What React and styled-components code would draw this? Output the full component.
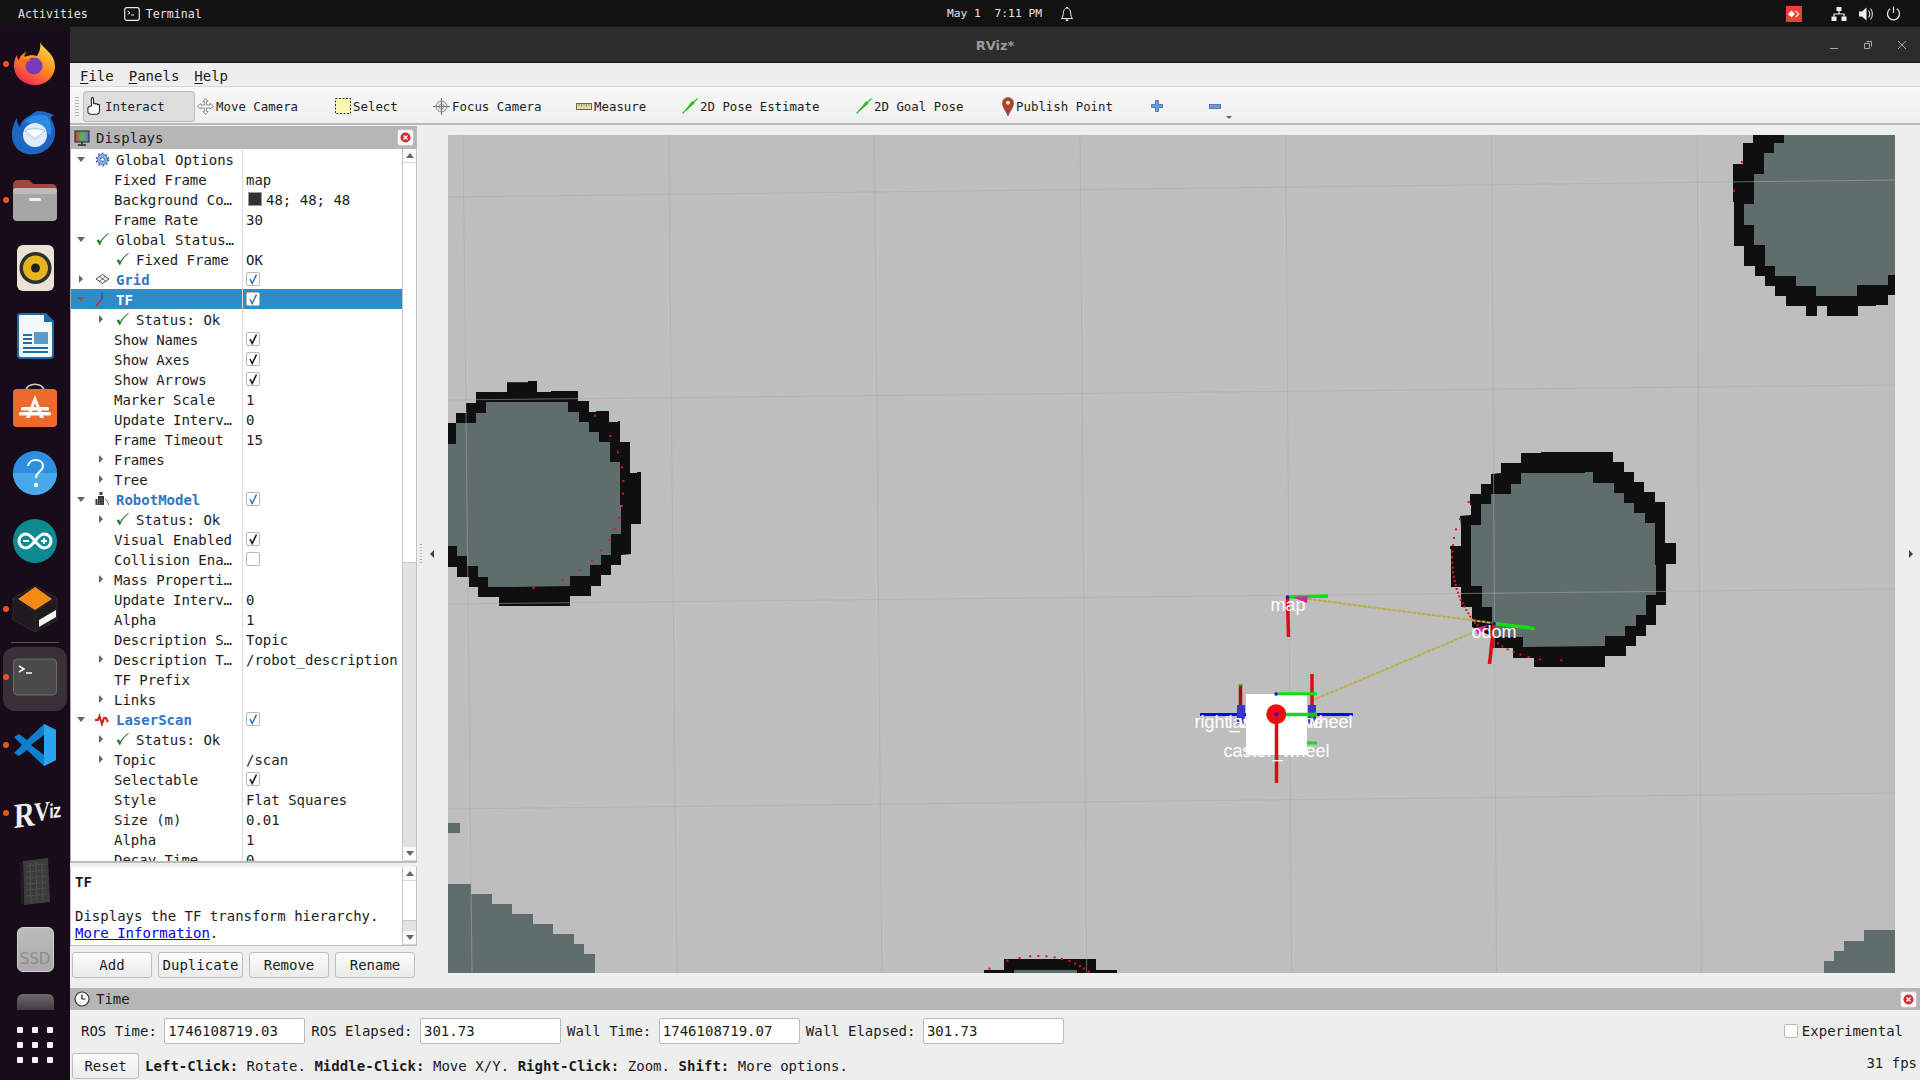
import React from "react";
import styled, { createGlobalStyle } from "styled-components";

const mono = `"DejaVu Sans Mono", "Liberation Mono", monospace`;

const GlobalStyle = createGlobalStyle`
  html, body {
    margin: 0;
    width: 1920px;
    height: 1080px;
    overflow: hidden;
    background: #eeeeee;
    font-family: ${mono};
    color: #1c1c1c;
  }
  * { box-sizing: border-box; }
`;

const Page = styled.div`
  width: 1920px;
  height: 1080px;
  display: flex;
  flex-direction: column;
  overflow: hidden;
`;

/* gnome top bar */
const TopBar = styled.div`
  height: 27px;
  background: #121212;
  color: #e4e4e4;
  font-size: 11.6px;
  display: grid;
  grid-template-columns: 1fr auto 1fr;
  align-items: center;
  flex: none;
`;
const TopLeft = styled.div`
  display: flex;
  align-items: center;
  padding-left: 18px;
`;
const TopApp = styled.div`
  display: flex;
  align-items: center;
  gap: 6px;
  margin-left: 36px;
`;
const TopClock = styled.div`
  display: flex;
  align-items: center;
  gap: 17px;
  padding-left: 102px;
  font-size: 11.3px;
`;
const TopTray = styled.div`
  display: flex;
  align-items: center;
  justify-content: flex-end;
  padding-right: 19px;
  svg { display: block; }
`;
const TrayItem = styled.div`
  margin-left: ${({ $gap }) => $gap}px;
  display: flex;
`;

const Body = styled.div`
  flex: 1;
  display: flex;
  min-height: 0;
`;

/* dock */
const Dock = styled.div`
  width: 70px;
  flex: none;
  background: #180c1b;
  display: flex;
  flex-direction: column;
`;
const DockList = styled.div`
  flex: 1;
  padding-top: 3px;
  overflow: hidden;
  min-height: 0;
`;
const DockItem = styled.div`
  height: 68.1px;
  position: relative;
  display: flex;
  align-items: center;
  justify-content: center;
  &::before {
    content: "";
    display: ${({ $running }) => ($running ? "block" : "none")};
    position: absolute;
    left: 3px;
    top: 31px;
    width: 6px;
    height: 6px;
    border-radius: 50%;
    background: #e95420;
  }
`;
const ActiveBox = styled.div`
  width: 64px;
  height: 64px;
  margin-top: 5px;
  background: #3a3138;
  border-radius: 12px;
  display: flex;
  align-items: center;
  justify-content: center;
`;
const DockSeparator = styled.div`
  position: absolute;
  left: 11px;
  right: 11px;
  top: -1px;
  height: 1px;
  background: #5a5059;
`;
const RvizLogo = styled.span`
  font-family: "Liberation Serif", serif;
  font-weight: 700;
  font-size: 35px;
  line-height: 1;
  letter-spacing: -1px;
  color: #f0f0f0;
  margin-left: 4px;
  transform: scaleX(0.82) skewY(-6deg);
  white-space: nowrap;
`;
const RvizV = styled.span`
  font-size: 27px;
  vertical-align: 4px;
`;
const RvizTail = styled.span`
  font-family: "Liberation Sans", sans-serif;
  font-size: 20px;
  vertical-align: 5px;
`;
const AppGrid = styled.div`
  height: 72px;
  flex: none;
  display: grid;
  grid-template-columns: repeat(3, 6px);
  grid-template-rows: repeat(3, 6px);
  gap: 9px;
  justify-content: center;
  padding-top: 19px;
  margin-top: -2px;
  background: #180c1b;
  span { background: #f4f4f4; border-radius: 1px; }
`;

/* window */
const Window = styled.div`
  flex: 1;
  display: flex;
  flex-direction: column;
  min-width: 0;
  background: #eeeeee;
`;
const TitleBar = styled.div`
  height: 36px;
  flex: none;
  position: relative;
  padding-top: 2px;
  background: #2c2c2c;
  border-bottom: 1px solid #161616;
  display: flex;
  align-items: center;
  justify-content: center;
  font-family: "DejaVu Sans", sans-serif;
  font-weight: 700;
  font-size: 13px;
  color: #9c9c9c;
`;
const WindowControls = styled.div`
  position: absolute;
  right: 14px;
  top: 14px;
  display: flex;
  gap: 26px;
  svg { display: block; }
`;
const MenuBar = styled.div`
  height: 24px;
  flex: none;
  display: flex;
  align-items: center;
  padding: 2px 0 0 10px;
  gap: 15px;
  font-size: 14px;
  background: #eeeeee;
  border-bottom: 1px solid #d6d6d6;
`;
const MenuItem = styled.span`
  u { text-underline-offset: 2px; }
`;
const ToolBar = styled.div`
  height: 38px;
  flex: none;
  display: flex;
  align-items: center;
  padding: 2px 0 0 5px;
  background: linear-gradient(#f8f8f8, #efefef);
  border-bottom: 2px solid #bababa;
`;
const Grip = styled.div`
  width: 4px;
  height: 20px;
  margin-right: 4px;
  background-image: radial-gradient(#b5b5b5 40%, transparent 45%);
  background-size: 2px 3px;
`;
const Tool = styled.div`
  width: ${({ $w }) => $w}px;
  height: 31px;
  flex: none;
  display: flex;
  align-items: center;
  gap: 2px;
  padding-left: 1px;
  font-size: 12.4px;
  border: 1px solid ${({ $on }) => ($on ? "#bcbcbc" : "transparent")};
  border-radius: 3px;
  background: ${({ $on }) => ($on ? "#dddddd" : "transparent")};
  svg { flex: none; display: block; }
`;
const HandWrap = styled.span`
  display: flex;
  margin-right: -3px;
`;
const ToolSlim = styled.div`
  width: ${({ $w }) => $w}px;
  flex: none;
  position: relative;
  display: flex;
  padding-left: 6px;
`;
const DropMark = styled.i`
  position: absolute;
  left: 23px;
  top: 12px;
  border-left: 3px solid transparent;
  border-right: 3px solid transparent;
  border-top: 3px solid #666;
`;

const Main = styled.div`
  flex: 1;
  min-height: 0;
  display: flex;
`;
const LeftPanel = styled.div`
  width: 347px;
  flex: none;
  padding-top: 1px;
  display: flex;
  flex-direction: column;
`;
const DockHeader = styled.div`
  height: ${({ $h }) => $h}px;
  flex: none;
  background: #b6b6b6;
  display: flex;
  align-items: center;
  padding: 0 3px 0 4px;
  font-size: 14px;
  gap: 6px;
  svg { display: block; flex: none; }
`;
const HeaderTitle = styled.span`
  flex: 1;
`;
const CloseChip = styled.div`
  width: 17px;
  height: 17px;
  background: #f7f7f7;
  border: 1px solid #c4c4c4;
  border-radius: 3px;
  display: flex;
  align-items: center;
  justify-content: center;
`;
const TreeArea = styled.div`
  height: 714px;
  flex: none;
  display: flex;
  background: #ffffff;
  border-left: 1px solid #adadad;
  border-bottom: 2px solid #bcbcbc;
`;
const TreeList = styled.div`
  flex: 1;
  overflow: hidden;
  min-width: 0;
`;
const Row = styled.div`
  height: 20px;
  display: grid;
  grid-template-columns: 172px 1fr;
  font-size: 14px;
  line-height: 20px;
  white-space: nowrap;
  background: ${({ $sel }) => ($sel ? "#308cc6" : "transparent")};
`;
const LabelCell = styled.div`
  display: flex;
  align-items: center;
  padding-left: ${({ $level }) => $level * 20}px;
  border-right: 1px solid #dcdcdc;
  overflow: hidden;
`;
const ArrowSlot = styled.div`
  width: 20px;
  flex: none;
  display: flex;
  align-items: center;
  justify-content: center;
`;
const Tri = styled.i`
  display: block;
  ${({ $open }) =>
    $open
      ? `border-left: 4px solid transparent; border-right: 4px solid transparent; border-top: 5px solid #666;`
      : `border-top: 4px solid transparent; border-bottom: 4px solid transparent; border-left: 4px solid #666;`}
`;
const IconSlot = styled.div`
  width: 22px;
  flex: none;
  display: flex;
  align-items: center;
  justify-content: center;
  svg { display: block; }
`;
const LabelText = styled.span`
  margin-left: 3px;
  padding-top: 2px;
  font-weight: ${({ $display }) => ($display ? 700 : 400)};
  color: ${({ $sel, $display }) => ($sel ? "#ffffff" : $display ? "#2f76c4" : "#1c1c1c")};
`;
const ValueCell = styled.div`
  display: flex;
  align-items: center;
  gap: 4px;
  padding-left: 3px;
  overflow: hidden;
`;
const ValueText = styled.span`
  padding-top: 2px;
`;
const Swatch = styled.i`
  width: 14px;
  height: 14px;
  margin-left: 2px;
  background: #303030;
  border: 1px solid #999;
`;
const CheckBox = styled.div`
  width: 14px;
  height: 14px;
  background: #fff;
  border: 1px solid #b8b8b8;
  border-radius: 2px;
  display: flex;
  align-items: center;
  justify-content: center;
  svg { display: block; }
`;
const ScrollBar = styled.div`
  width: 15px;
  flex: none;
  display: flex;
  flex-direction: column;
  background: #e2e2e2;
  border-left: 1px solid #c4c4c4;
  border-right: 1px solid #c4c4c4;
`;
const ScrollBtn = styled.div`
  height: 14px;
  flex: none;
  background: #fbfbfb;
  display: flex;
  align-items: center;
  justify-content: center;
  margin-top: ${({ $end }) => ($end ? "auto" : 0)};
  border-bottom: 1px solid #d8d8d8;
`;
const ScrollMark = styled.i`
  border-left: 4px solid transparent;
  border-right: 4px solid transparent;
  ${({ $up }) => ($up ? "border-bottom" : "border-top")}: 5px solid #666;
`;
const ScrollThumb = styled.div`
  height: ${({ $h }) => $h}px;
  flex: none;
  background: #ffffff;
  border-bottom: 1px solid #c8c8c8;
`;
const HelpBox = styled.div`
  height: 79px;
  flex: none;
  margin-top: 4px;
  display: flex;
  background: #fff;
  border-left: 1px solid #c4c4c4;
  border-bottom: 1px solid #bcbcbc;
`;
const HelpText = styled.div`
  flex: 1;
  padding: 7px 0 0 4px;
  font-size: 14px;
  line-height: 17px;
  b { display: block; height: 34px; }
  a { color: #0000ee; text-decoration: underline; }
`;
const ButtonRow = styled.div`
  display: grid;
  grid-template-columns: 80px 85px 80px 80px;
  gap: 6px;
  padding: 6px 0 0 2px;
`;
const Button = styled.div`
  height: 26px;
  display: flex;
  align-items: center;
  justify-content: center;
  font-size: 14px;
  background: linear-gradient(#fcfcfc, #ebebeb);
  border: 1px solid #bdbdbd;
  border-radius: 3px;
  width: ${({ $w }) => ($w ? `${$w}px` : "auto")};
`;
const CenterSplit = styled.div`
  width: 31px;
  flex: none;
  display: flex;
  align-items: center;
  gap: 8px;
  padding: 0 0 6px 3px;
`;
const GripDots = styled.i`
  width: 2px;
  height: 22px;
  background-image: radial-gradient(#b5b5b5 40%, transparent 45%);
  background-size: 2px 3px;
`;
const SideArrow = styled.i`
  border-top: 4px solid transparent;
  border-bottom: 4px solid transparent;
  ${({ $right }) => ($right ? "border-left" : "border-right")}: 4px solid #444;
`;
const CanvasColumn = styled.div`
  width: 1447px;
  flex: none;
  padding-top: 10px;
  svg { display: block; }
`;
const RightSplit = styled.div`
  flex: 1;
  display: flex;
  align-items: center;
  justify-content: center;
  padding: 0 0 6px 7px;
`;
const TimeRow = styled.div`
  height: 43px;
  flex: none;
  display: flex;
  align-items: center;
  padding: 0 0 2px 11px;
  font-size: 14px;
`;
const TimeLabel = styled.span`
  margin-right: 7.5px;
`;
const TimeField = styled.div`
  width: 141px;
  height: 26px;
  flex: none;
  margin-right: 6px;
  padding-left: 3px;
  display: flex;
  align-items: center;
  background: #ffffff;
  border: 1px solid #b9b9b9;
  border-radius: 2px;
`;
const Experimental = styled.div`
  margin-left: auto;
  margin-right: 17px;
  display: flex;
  align-items: center;
  gap: 4px;
`;
const StatusRow = styled.div`
  height: 27px;
  flex: none;
  display: flex;
  align-items: flex-start;
  padding-left: 2px;
  font-size: 14px;
  white-space: pre;
`;
const StatusText = styled.span`
  margin-left: 6px;
  line-height: 26px;
  letter-spacing: 0.04px;
`;
const Fps = styled.span`
  margin-left: auto;
  margin-right: 3px;
  line-height: 20px;
`;

/* small icons */
const Svg = ({ s = 16, w, h, vb, children }) => (
  <svg width={w || s} height={h || s} viewBox={vb || `0 0 ${s} ${s}`}>{children}</svg>
);

const TerminalGlyph = () => (
  <Svg s={16}>
    <rect x="0.7" y="1.7" width="14.6" height="12.6" rx="2" fill="none" stroke="#e8e8e8" strokeWidth="1.2" />
    <path d="M3.5 5l2.5 1.8-2.5 1.8M7 9h3" fill="none" stroke="#e8e8e8" />
  </Svg>
);
const Bell = () => (
  <Svg s={16}>
    <path d="M2.5 12.5c1.4-1.4 1.6-3 1.8-5.4C4.5 4.4 5.8 2 8 2s3.500 2.4 3.700 5.100c.2 2.400.4 4 1.800 5.400z" fill="none" stroke="#eee" strokeWidth="1" />
    <path d="M6.700 14.200h2.600" stroke="#eee" strokeWidth="1.600" />
    <path d="M7 1.500h2" stroke="#eee" />
  </Svg>
);
const AnyDesk = () => (
  <Svg s={16}>
    <rect width="16" height="16" fill="#ef3e36" />
    <path d="M5.500 4.500l3.500 3.500-3.500 3.500L2 8z" fill="#fff" />
    <path d="M10 4.500L13.500 8 10 11.500 9.200 10.700 11.900 8 9.200 5.300z" fill="#fff" />
  </Svg>
);
const Network = () => (
  <Svg s={16}>
    <path d="M5.500 1h5v4h-5zM.5 10.500h5v4.500h-5zM10.500 10.500h5v4.500h-5z" fill="#eee" />
    <path d="M8 5v3M3 10.500V8h10v2.500" fill="none" stroke="#eee" strokeWidth="1.200" />
  </Svg>
);
const Volume = () => (
  <Svg s={16}>
    <path d="M1 5.500h3L8.500 1.500v13L4 10.500H1z" fill="#eee" />
    <path d="M10.500 4.500c1.500 2 1.500 5 0 7M12.500 2.500c2.500 3 2.500 8 0 11" fill="none" stroke="#ddd" strokeWidth="1.100" />
  </Svg>
);
const Power = () => (
  <Svg s={15}>
    <path d="M4.200 2.800a6 6 0 1 0 6.600 0M7.500 .5v6.500" fill="none" stroke="#eee" strokeWidth="1.200" />
  </Svg>
);

const HandTool = () => (
  <HandWrap>
    <Svg w={21} h={22} vb="0 0 18 18">
      <path d="M5.500 9.500V2.800c0-1.300 1.800-1.300 1.800 0v4.700c0-1.100 1.700-1.100 1.700 0v.3c0-1 1.700-1 1.700 0v.5c0-1 1.700-1 1.700 0v5c0 1.600-1 2.700-2.500 2.700H5c-1.300 0-2.500-.6-2.500-2.200V10.600c0-1.100 3-1.600 3-1.100z" fill="#fff" stroke="#222" strokeWidth=".9" />
    </Svg>
  </HandWrap>
);
const MoveTool = () => (
  <Svg s={17}>
    <path d="M8.500 .5l2.500 3H9.500v3.500H13V5.500l3.500 3-3.500 2.500V10H9.500v3.500H11l-2.500 3-2.500-3h1.500V10H4v1L.5 8.500l3.500-3V7h3.500V3.500H6z" fill="#f3f3f3" stroke="#777" strokeWidth=".8" />
  </Svg>
);
const SelectTool = () => (
  <Svg s={16}>
    <rect x=".5" y=".5" width="15" height="15" fill="#fdf6b0" stroke="#333" strokeDasharray="2 1.500" />
  </Svg>
);
const FocusTool = () => (
  <Svg s={17}>
    <circle cx="8.500" cy="8.500" r="5.500" fill="#e6e6e6" stroke="#888" />
    <circle cx="8.500" cy="8.500" r="2.500" fill="none" stroke="#999" />
    <path d="M8.500 0v17M0 8.500h17" stroke="#777" />
  </Svg>
);
const RulerTool = () => (
  <Svg w={16} h={7} vb="0 0 16 7">
    <rect x=".5" y=".5" width="15" height="6" fill="#e7dc9a" stroke="#666" />
    <path d="M3 1v2M5.500 1v3M8 1v2M10.500 1v3M13 1v2" stroke="#666" strokeWidth=".7" />
  </Svg>
);
const PoseTool = () => (
  <Svg s={16}>
    <path d="M.5 15.500L15.500 .5" stroke="#14d214" strokeWidth="1.300" />
    <path d="M4 12l6-8.500 2 2z" fill="#14d214" stroke="#0a8f0a" strokeWidth=".5" />
  </Svg>
);
const PinTool = () => (
  <Svg w={12} h={19} vb="0 0 12 19">
    <path d="M6 19C4.500 14.500 .5 11 .5 6a5.500 5.500 0 0 1 11 0c0 5-4 8.500-5.500 13z" fill="#a8472a" stroke="#7a2f1a" strokeWidth=".5" />
    <circle cx="6" cy="5.800" r="2" fill="#eadbd0" />
  </Svg>
);
const PlusTool = () => (
  <Svg s={12}>
    <path d="M4.500 .5h3v4h4v3h-4v4h-3v-4h-4v-3h4z" fill="#6d9bd6" stroke="#3f6ca8" strokeWidth=".8" />
  </Svg>
);
const MinusTool = () => (
  <Svg w={12} h={5} vb="0 0 12 5">
    <rect x=".5" y=".5" width="11" height="4" fill="#6d9bd6" stroke="#3f6ca8" strokeWidth=".8" />
  </Svg>
);
const Monitor = () => (
  <Svg s={16}>
    <rect x="1" y="1" width="14" height="11" fill="url(#mon)" stroke="#222" />
    <defs>
      <linearGradient id="mon" x1="0" x2="1" y1="0" y2="0">
        <stop offset="0" stopColor="#c04040" />
        <stop offset=".5" stopColor="#60b060" />
        <stop offset="1" stopColor="#6070c8" />
      </linearGradient>
    </defs>
    <path d="M8 12v2M4 15h8" stroke="#222" strokeWidth="1.500" />
  </Svg>
);
const CloseBadge = () => (
  <Svg s={11}>
    <circle cx="5.500" cy="5.500" r="5" fill="#d92b35" />
    <path d="M3.500 3.500l4 4M7.500 3.500l-4 4" stroke="#fff" strokeWidth="1.400" />
  </Svg>
);
const Clock = () => (
  <Svg s={16}>
    <circle cx="8" cy="8" r="7" fill="#fff" stroke="#333" strokeWidth="1.200" />
    <path d="M8 3.500V8h3.500" fill="none" stroke="#222" strokeWidth="1.200" />
  </Svg>
);
const Tick = ({ c = "#1f7d2c" }) => (
  <Svg s={15}>
    <path d="M2 8.500l2.800 4.500C6.500 8.500 9 4.500 13.500 1.500 9.500 4 7 7 5 10.200L3.800 7.800z" fill={c} stroke={c} strokeWidth=".7" />
  </Svg>
);
const BoxTick = ({ blue }) => (
  <Svg s={12}>
    <path d="M3 6l2.200 4.500L9.500 1.500" fill="none" stroke={blue ? "#2f76c4" : "#111"} strokeWidth="1.500" />
  </Svg>
);
const Gear = () => (
  <Svg s={15}>
    <circle cx="7.500" cy="7.500" r="5" fill="#8fb2e6" stroke="#3d69b5" strokeWidth="1.100" strokeDasharray="2 .6" />
    <circle cx="7.500" cy="7.500" r="6.300" fill="none" stroke="#3d69b5" strokeWidth="1.200" strokeDasharray="2 2" />
    <circle cx="7.500" cy="7.500" r="2" fill="#fff" stroke="#3d69b5" />
  </Svg>
);
const GridGlyph = () => (
  <Svg s={15}>
    <path d="M7.500 2.500l6.500 4.500-6.500 4.500L1 7z" fill="none" stroke="#444" />
    <path d="M4.500 4.500l6.500 5M10.500 4.500l-6.500 5" stroke="#444" strokeWidth=".8" />
  </Svg>
);
const TfGlyph = () => (
  <Svg s={16}>
    <path d="M7 9L2 15" stroke="#e02020" strokeWidth="1.400" />
    <path d="M8 9V1" stroke="#2838c8" strokeWidth="1.200" />
    <path d="M8 9l7-1" stroke="#18b018" strokeWidth="1.200" />
  </Svg>
);
const RobotGlyph = () => (
  <Svg s={16}>
    <rect x="5.500" y="1" width="3" height="3" fill="#2b3a78" />
    <path d="M4 5h6v9H4zM1.500 8h2v6h-2z" fill="#333" />
    <path d="M11 8c2 1 3 3 3.500 6M5.500 7v7M8 7v7" fill="none" stroke="#666" />
  </Svg>
);
const LaserGlyph = () => (
  <Svg s={16}>
    <path d="M1 9h3l1.500-4 2.500 8 2-6h2l2 4" fill="none" stroke="#e01818" strokeWidth="2" />
  </Svg>
);

/* dock icons */
const IconFirefox = () => (
  <Svg w={44} h={44} vb="0 0 44 44">
    <defs>
      <linearGradient id="ffx" x1="0.800" y1="0" x2="0.200" y2="1">
        <stop offset="0" stopColor="#ffe14a" />
        <stop offset=".5" stopColor="#ff8a1e" />
        <stop offset="1" stopColor="#f01f5e" />
      </linearGradient>
    </defs>
    <path d="M27 0c2 6 15 11 15 24 0 11-9 19-20 19S1 35 1 24c0-5 1-8 3-11 0 3 1 4 2 5 1-4 4-7 8-8 0 0-4 3-2 5 3-2 9-2 12-1 3-5 4-9 3-14z" fill="url(#ffx)" />
    <path d="M11 16c3-3 7-2 11-1 5 1 8 5 7 11-1 5-7 8-12 5-3-2-4-6-2-10z" fill="#ff9a26" />
    <circle cx="21" cy="24" r="8.500" fill="#7b3bb8" />
    <path d="M6 18c3-1 8-2 12 1-3 0-5 1-5 3-4 0-6-2-7-4z" fill="#ff6a20" />
  </Svg>
);
const IconThunderbird = () => (
  <Svg w={48} h={48} vb="0 0 48 48">
    <path d="M28 3c6 0 12 3 15 4-2 1-3 2-3 4 5 8 6 18 0 26-5 7-15 11-24 9C7 44 0 36 1 25c0-6 3-12 5-15 0 4 1 7 3 9 1-7 7-10 11-12 2-2 5-4 8-4z" fill="#1d66c4" />
    <path d="M14 14c4-6 14-9 22-6 4 5 6 14 3 20-4-7-14-12-25-14z" fill="#2b8be0" />
    <circle cx="24" cy="27" r="12" fill="#dfeafa" />
    <path d="M14 23l10 8 10-8c-3-3-17-3-20 0z" fill="#fff" stroke="#9fc2ea" />
  </Svg>
);
const IconFolder = () => (
  <Svg w={44} h={42} vb="0 0 44 42">
    <path d="M0 6a5 5 0 0 1 5-5h11l4 4h19a5 5 0 0 1 5 5v8H0z" fill="#9c4a3c" />
    <rect y="9" width="44" height="33" rx="4" fill="#a6a6a6" />
    <rect y="9" width="44" height="6" rx="3" fill="#bcbcbc" />
    <rect x="16" y="19" width="12" height="3" rx="1.500" fill="#f2f2f2" />
  </Svg>
);
const IconRhythm = () => (
  <Svg w={37} h={46} vb="0 0 37 46">
    <rect width="37" height="46" rx="6" fill="#e9e3d3" />
    <circle cx="18.500" cy="23" r="16" fill="#2f2f2f" />
    <circle cx="18.500" cy="23" r="12.500" fill="#e5b41f" />
    <circle cx="18.500" cy="23" r="4.500" fill="#1f1f1f" />
  </Svg>
);
const IconWriter = () => (
  <Svg w={37} h={46} vb="0 0 37 46">
    <path d="M3 0h26l8 8v34a4 4 0 0 1-4 4H4a4 4 0 0 1-4-4V3a3 3 0 0 1 3-3z" fill="#1e6ea5" />
    <path d="M3 2h24v7h8v33a2 2 0 0 1-2 2H4a2 2 0 0 1-2-2V3z" fill="#f2f7fa" />
    <path d="M6 22h9M6 26h9M6 30h9M6 35h25M6 39h25" stroke="#1e6ea5" strokeWidth="2" />
    <rect x="17" y="19" width="14" height="12" fill="#5a9bc8" />
  </Svg>
);
const IconStore = () => (
  <Svg w={44} h={44} vb="0 0 44 44">
    <path d="M13 8c0-9 18-9 18 0" fill="none" stroke="#e6c9a0" strokeWidth="1.600" />
    <rect y="6" width="44" height="38" rx="4" fill="#ee6a2c" />
    <path d="M22 12l9 23h-4l-5-15-5 15h-4z" fill="#fff" />
    <rect x="8" y="24" width="28" height="3.500" rx="1.500" fill="#fff" />
    <rect x="6" y="29" width="32" height="3.500" rx="1.500" fill="#fff" />
  </Svg>
);
const IconHelp = () => (
  <Svg w={44} h={44} vb="0 0 44 44">
    <circle cx="22" cy="22" r="22" fill="#2d8fdf" />
    <path d="M0 22a22 22 0 0 0 44 0z" fill="#49a8ea" />
    <path d="M15 15c1-8 15-8 15 0 0 6-7 5-7 12" fill="none" stroke="#fff" strokeWidth="2" />
    <circle cx="23" cy="34" r="2.200" fill="#fff" />
  </Svg>
);
const IconArduino = () => (
  <Svg w={44} h={44} vb="0 0 44 44">
    <circle cx="22" cy="22" r="22" fill="#0d8a8f" />
    <path d="M13 15a7 7 0 1 0 0 14c7 0 11-14 18-14a7 7 0 1 1 0 14c-7 0-11-14-18-14z" fill="none" stroke="#fff" strokeWidth="3" />
    <path d="M10 22h6M28 22h6M31 19v6" stroke="#fff" strokeWidth="1.800" />
  </Svg>
);
const IconBox = () => (
  <Svg w={48} h={48} vb="0 0 48 48">
    <path d="M24 1l22 12v22L24 47 2 35V13z" fill="#1f1a20" stroke="#2e2a30" />
    <path d="M24 2l17 12-17 11L7 14z" fill="#f48a12" />
    <path d="M28 42l17-10v-7L28 35z" fill="#f4f4f4" />
    <path d="M3 14l21 12v20M24 26l21-12" fill="none" stroke="#2d282f" />
  </Svg>
);
const IconTerminal = () => (
  <Svg w={44} h={44} vb="0 0 44 44">
    <rect x=".5" y="2" width="43" height="36" rx="4" fill="#4b4b4b" stroke="#6d6d6d" />
    <path d="M6 9l5 3-5 3M13 16h6" fill="none" stroke="#fff" strokeWidth="1.500" />
  </Svg>
);
const IconCode = () => (
  <Svg w={42} h={42} vb="0 0 42 42">
    <path d="M30 0l12 6v30l-12 6-17-16-8 6-5-3 8-8-8-8 5-3 8 6z" fill="#0d7fcc" />
    <path d="M30 0l12 6v30l-12 6z" fill="#2aa4ee" />
    <path d="M30 11L17 21l13 10z" fill="#180c1b" />
  </Svg>
);
const IconDrive = () => (
  <Svg w={30} h={47} vb="0 0 30 47">
    <path d="M3 3l25-3 2 44-26 3z" fill="#3c3c3c" />
    <path d="M3 3L0 5l1 40 3 2z" fill="#1e1e1e" />
    <path d="M6 8l20-2M6 14l20-2M6 20l21-2M6 26l21-2M6 32l21-2M6 38l21-2M10 5l1 40M16 4l1 40M22 4l1 40" stroke="#555" strokeWidth="1" strokeDasharray="2 1" />
  </Svg>
);
const SsdChip = styled.div`
  width: 37px;
  height: 45px;
  border-radius: 6px;
  background: linear-gradient(#bcbcbc, #aaaaaa);
  border: 1px solid #d0d0d0;
  font-family: "DejaVu Sans", sans-serif;
  font-size: 15px;
  color: #8d8d8d;
  display: flex;
  align-items: flex-end;
  justify-content: center;
  padding-bottom: 3px;
`;
const PartialDisk = styled.div`
  width: 37px;
  height: 46px;
  border-radius: 6px;
  background: linear-gradient(#6f6a6e, #3c353b 40%);
`;

const dockItems = [
  { el: <IconFirefox />, run: true },
  { el: <IconThunderbird /> },
  { el: <IconFolder />, run: true },
  { el: <IconRhythm /> },
  { el: <IconWriter /> },
  { el: <IconStore /> },
  { el: <IconHelp /> },
  { el: <IconArduino /> },
  { el: <IconBox />, run: true },
  { el: <ActiveBox><IconTerminal /></ActiveBox>, run: true, sep: true },
  { el: <IconCode />, run: true },
  { el: <RvizLogo>R<RvizV>V</RvizV><RvizTail>iz</RvizTail></RvizLogo>, run: true },
  { el: <IconDrive /> },
  { el: <SsdChip>SSD</SsdChip> },
  { el: <PartialDisk /> },
];

const tools = [
  { w: 112, icon: <HandTool />, text: "Interact", on: true },
  { w: 138, icon: <MoveTool />, text: "Move Camera" },
  { w: 98, icon: <SelectTool />, text: "Select" },
  { w: 143, icon: <FocusTool />, text: "Focus Camera" },
  { w: 106, icon: <RulerTool />, text: "Measure" },
  { w: 174, icon: <PoseTool />, text: "2D Pose Estimate" },
  { w: 146, icon: <PoseTool />, text: "2D Goal Pose" },
  { w: 145, icon: <PinTool />, text: "Publish Point" },
];

const rows = [
  { l: 0, t: "Global Options", open: true, icon: <Gear /> },
  { l: 1, t: "Fixed Frame", v: "map" },
  { l: 1, t: "Background Co…", v: "48; 48; 48", swatch: true },
  { l: 1, t: "Frame Rate", v: "30" },
  { l: 0, t: "Global Status…", open: true, icon: <Tick /> },
  { l: 1, t: "Fixed Frame", icon: <Tick />, v: "OK" },
  { l: 0, t: "Grid", open: false, icon: <GridGlyph />, display: true, c: "blue" },
  { l: 0, t: "TF", open: true, icon: <TfGlyph />, display: true, c: "blue", sel: true },
  { l: 1, t: "Status: Ok", open: false, icon: <Tick /> },
  { l: 1, t: "Show Names", c: "black" },
  { l: 1, t: "Show Axes", c: "black" },
  { l: 1, t: "Show Arrows", c: "black" },
  { l: 1, t: "Marker Scale", v: "1" },
  { l: 1, t: "Update Interv…", v: "0" },
  { l: 1, t: "Frame Timeout", v: "15" },
  { l: 1, t: "Frames", open: false },
  { l: 1, t: "Tree", open: false },
  { l: 0, t: "RobotModel", open: true, icon: <RobotGlyph />, display: true, c: "blue" },
  { l: 1, t: "Status: Ok", open: false, icon: <Tick /> },
  { l: 1, t: "Visual Enabled", c: "black" },
  { l: 1, t: "Collision Ena…", c: "none" },
  { l: 1, t: "Mass Properti…", open: false },
  { l: 1, t: "Update Interv…", v: "0" },
  { l: 1, t: "Alpha", v: "1" },
  { l: 1, t: "Description S…", v: "Topic" },
  { l: 1, t: "Description T…", v: "/robot_description", open: false },
  { l: 1, t: "TF Prefix" },
  { l: 1, t: "Links", open: false },
  { l: 0, t: "LaserScan", open: true, icon: <LaserGlyph />, display: true, c: "blue" },
  { l: 1, t: "Status: Ok", open: false, icon: <Tick /> },
  { l: 1, t: "Topic", v: "/scan", open: false },
  { l: 1, t: "Selectable", c: "black" },
  { l: 1, t: "Style", v: "Flat Squares" },
  { l: 1, t: "Size (m)", v: "0.01" },
  { l: 1, t: "Alpha", v: "1" },
  { l: 1, t: "Decay Time", v: "0" },
];

function TreeRow({ r }) {
  return (
    <Row $sel={r.sel}>
      <LabelCell $level={r.l}>
        <ArrowSlot>{r.open !== undefined && <Tri $open={r.open} />}</ArrowSlot>
        {r.icon && <IconSlot>{r.icon}</IconSlot>}
        <LabelText $display={r.display} $sel={r.sel}>{r.t}</LabelText>
      </LabelCell>
      <ValueCell>
        {r.c && <CheckBox>{r.c !== "none" && <BoxTick blue={r.c === "blue"} />}</CheckBox>}
        {r.swatch && <Swatch />}
        {r.v && <ValueText>{r.v}</ValueText>}
      </ValueCell>
    </Row>
  );
}

/* map data, traced from the reference */
const pts = (list, ox, oy, sx = 3, sy = 3) =>
  list.map(([x, y]) => `${x / sx + ox},${y / sy + oy}`).join(" ");

const blobs = [
  {
    ox: 440, oy: 370,
    outer: [[201,37],[264,37],[264,33],[291,33],[291,66],[333,66],[333,63],[414,63],[414,93],[447,93],[447,126],[468,126],[468,123],[507,123],[507,156],[534,156],[534,153],[540,153],[540,216],[570,216],[570,309],[591,309],[591,306],[603,306],[603,462],[573,462],[573,552],[543,555],[543,585],[513,585],[513,615],[483,615],[483,648],[453,648],[453,678],[390,678],[390,708],[177,708],[177,681],[114,681],[114,651],[87,651],[87,621],[51,621],[51,591],[24,591],[24,159],[48,159],[48,129],[78,129],[78,99],[108,99],[108,66],[201,66]],
    inner: [[138,96],[384,96],[384,126],[417,126],[417,156],[447,156],[447,186],[477,186],[477,216],[510,216],[510,276],[540,276],[540,405],[543,405],[543,492],[513,492],[513,555],[483,555],[483,585],[450,585],[450,618],[390,618],[390,648],[216,651],[144,651],[144,621],[114,621],[114,588],[81,588],[81,558],[51,558],[51,528],[24,528],[24,222],[48,222],[48,159],[108,159],[108,129],[138,129]],
    dots: [[465,137],[511,198],[534,247],[546,292],[550,333],[549,371],[546,408],[537,443],[523,477],[506,510],[484,541],[456,571],[419,601],[367,631],[281,654]],
  },
  {
    ox: 1440, oy: 440,
    outer: [[243,39],[303,39],[303,36],[519,36],[519,66],[552,66],[552,96],[582,96],[582,126],[612,126],[612,156],[645,156],[645,186],[675,186],[675,309],[708,309],[708,372],[678,372],[678,495],[648,495],[648,555],[618,555],[618,588],[588,588],[588,618],[558,618],[558,648],[495,648],[495,681],[282,681],[282,654],[219,654],[219,624],[160,624],[160,591],[96,561],[96,501],[63,501],[63,441],[33,441],[33,327],[30,327],[30,318],[63,318],[63,258],[60,228],[93,225],[93,195],[90,195],[90,162],[123,162],[123,132],[153,132],[153,102],[183,99],[183,69],[243,69]],
    inner: [[243,99],[435,99],[435,96],[459,96],[459,129],[522,129],[522,159],[552,159],[552,189],[582,189],[582,219],[615,219],[615,249],[645,249],[645,375],[648,375],[648,465],[618,465],[618,525],[588,525],[588,558],[555,558],[555,588],[495,588],[495,618],[249,621],[249,591],[156,591],[156,501],[126,501],[126,438],[93,438],[93,255],[123,255],[123,192],[153,192],[153,162],[213,162],[213,132],[243,132]],
    dots: [[86,186],[60,237],[48,268],[42,294],[39,315],[37,335],[36,352],[37,368],[38,383],[39,397],[41,410],[44,423],[47,435],[50,447],[54,458],[58,469],[62,480],[68,490],[73,500],[79,510],[85,520],[91,530],[98,538],[105,548],[113,556],[122,566],[137,570],[150,585],[162,601],[174,610],[187,619],[203,628],[221,636],[241,644],[266,651],[300,658],[364,661]],
  },
  {
    ox: 1720, oy: 120,
    outer: [[99,45],[99,69],[69,69],[69,132],[39,132],[39,246],[42,246],[42,378],[72,378],[72,438],[105,438],[105,468],[135,468],[135,498],[165,498],[165,528],[198,528],[198,558],[258,558],[258,588],[291,588],[291,558],[321,558],[321,588],[414,588],[414,558],[468,558],[468,555],[504,555],[504,525],[525,525],[525,45]],
    inner: [[192,45],[192,69],[162,69],[162,99],[132,99],[132,162],[102,162],[102,252],[72,252],[72,315],[102,315],[102,375],[135,375],[135,438],[165,438],[165,468],[228,468],[228,498],[288,498],[288,528],[411,528],[411,495],[504,495],[504,465],[525,465],[525,45]],
    dots: [[66,126],[42,212]],
  },
];

const BG_BLOCK = "#5f6e6c";
const BLACK = "#0f0f0f";

const bottomDots = [[428,146],[450,122],[465,114],[478,109],[488,108],[498,109],[508,112],[517,117],[526,123],[533,131],[539,138],[544,146],[550,155]];

function MapView() {
  const vLines = [0, 1, 2, 3, 4, 5, 6];
  const hLines = [[197, 180], [400, 385], [604, 589], [809, 793]];
  const label = { fill: "#fff", fontFamily: '"Liberation Sans", sans-serif', fontSize: 18, textAnchor: "middle" };
  return (
    <svg width="1447" height="838" viewBox="448 135 1447 838">
      <rect x="448" y="135" width="1447" height="838" fill="#bebebe" />
      {blobs.map((b) => (
        <g key={b.ox}>
          <polygon points={pts(b.outer, b.ox, b.oy)} fill={BLACK} />
          <polygon points={pts(b.inner, b.ox, b.oy)} fill={BG_BLOCK} />
        </g>
      ))}
      <polygon points="448,884 471,884 471,894 492,894 492,904 512,904 512,914 533,914 533,924 553,924 553,934 574,934 574,944 584,944 584,954 595,954 595,973 448,973" fill={BG_BLOCK} />
      <rect x="448" y="823" width="12" height="10" fill={BG_BLOCK} />
      <polygon points="1824,973 1824,961 1834,961 1834,951 1844,951 1844,941 1864,941 1864,930 1895,930 1895,973" fill={BG_BLOCK} />
      <polygon points="984,973 984,970 1004,970 1004,959 1096,959 1096,970 1117,970 1117,973" fill={BLACK} />
      <rect x="1014" y="970" width="63" height="3" fill={BG_BLOCK} />

      {vLines.map((i) => (
        <line key={i} x1={463 + 205.7 * i} y1="135" x2={472 + 204.9 * i} y2="973" stroke="#a9a9a9" strokeOpacity=".55" />
      ))}
      {hLines.map(([a, b]) => (
        <line key={a} x1="448" y1={a} x2="1895" y2={b} stroke="#a9a9a9" strokeOpacity=".55" />
      ))}

      {blobs.map((b) =>
        b.dots.map(([x, y]) => (
          <rect key={`${b.ox}-${x}-${y}`} x={x / 3 + b.ox - 1} y={y / 3 + b.oy - 1} width="2" height="2" fill="#e8101c" />
        ))
      )}
      {bottomDots.map(([x, y]) => (
        <rect key={x} x={x / 1.225 + 640 - 1} y={y / 3 + 920 - 1} width="2" height="2" fill="#e8101c" />
      ))}

      {/* tf links */}
      <line x1="1308" y1="599" x2="1493" y2="623" stroke="#b8b14a" strokeWidth="2" strokeDasharray="4 1" />
      <line x1="1472" y1="633" x2="1313" y2="700" stroke="#b8b14a" strokeWidth="2" strokeDasharray="4 1" />

      {/* axes behind the base */}
      <line x1="1200" y1="714.500" x2="1353" y2="714.500" stroke="#0808e8" strokeWidth="3" />
      <line x1="1240.500" y1="684" x2="1240.500" y2="705" stroke="#a80c12" strokeWidth="3.500" />
      <rect x="1239" y="684" width="3" height="2" fill="#16c816" />
      <line x1="1312" y1="674" x2="1312" y2="705" stroke="#dc0c12" strokeWidth="3.500" />
      <rect x="1237" y="705" width="8" height="19" fill="#3636c8" />
      <rect x="1308" y="705" width="8" height="19" fill="#3636c8" />

      <text x="1240.500" y="728" {...label}>right_wheel</text>
      <text x="1312" y="728" {...label}>left_wheel</text>
      <text x="1276" y="728" {...label}>laser_frame</text>

      <rect x="1246" y="694" width="61" height="61" fill="#ffffff" />
      <line x1="1276" y1="693.700" x2="1317" y2="693.700" stroke="#10e010" strokeWidth="3" />
      <line x1="1307" y1="743" x2="1317" y2="743" stroke="#10e010" strokeWidth="3" />
      <circle cx="1276" cy="694" r="1.700" fill="#0808f0" />

      <circle cx="1276.300" cy="714.300" r="10" fill="#f00c14" />
      <line x1="1276.500" y1="714" x2="1276.500" y2="783" stroke="#dc0c12" strokeWidth="3.500" />
      <line x1="1286" y1="714.500" x2="1317" y2="714.500" stroke="#10e010" strokeWidth="3.500" />
      <polygon points="1308,714 1316,714 1312,719" fill="#10c010" />
      <circle cx="1276.300" cy="714.300" r="1.700" fill="#0808f0" />

      <text x="1276.500" y="757" {...label}>caster_wheel</text>

      {/* map frame */}
      <line x1="1287.500" y1="597" x2="1328" y2="596" stroke="#10e010" strokeWidth="3.500" />
      <line x1="1287.500" y1="597" x2="1288.500" y2="637" stroke="#dc0c12" strokeWidth="3.500" />
      <polygon points="1292,597 1308,596 1307,603" fill="#e0209a" />
      <circle cx="1287.500" cy="597" r="1.700" fill="#0808f0" />
      <text x="1288" y="611" {...label}>map</text>

      {/* odom frame */}
      <line x1="1494" y1="623.500" x2="1534.500" y2="628.500" stroke="#10e010" strokeWidth="3.500" />
      <line x1="1494" y1="623.500" x2="1489.500" y2="664" stroke="#dc0c12" strokeWidth="3.500" />
      <polygon points="1475,628 1488,625 1478,635" fill="#e0209a" />
      <circle cx="1494" cy="623.500" r="1.700" fill="#0808f0" />
      <text x="1494" y="638" {...label}>odom</text>
    </svg>
  );
}

export default function App() {
  return (
    <Page>
      <GlobalStyle />
      <TopBar>
        <TopLeft>
          Activities
          <TopApp><TerminalGlyph />Terminal</TopApp>
        </TopLeft>
        <TopClock>
          <span>May 1&nbsp;&nbsp;7:11 PM</span>
          <Bell />
        </TopClock>
        <TopTray>
          <TrayItem $gap={0}><AnyDesk /></TrayItem>
          <TrayItem $gap={29}><Network /></TrayItem>
          <TrayItem $gap={11}><Volume /></TrayItem>
          <TrayItem $gap={12}><Power /></TrayItem>
        </TopTray>
      </TopBar>
      <Body>
        <Dock>
          <DockList>
            {dockItems.map((d, i) => (
              <DockItem key={i} $running={d.run}>
                {d.sep && <DockSeparator />}
                {d.el}
              </DockItem>
            ))}
          </DockList>
          <AppGrid>
            {Array.from({ length: 9 }, (_, i) => <span key={i} />)}
          </AppGrid>
        </Dock>
        <Window>
          <TitleBar>
            RViz*
            <WindowControls>
              <Svg w={8} h={8} vb="0 0 8 8"><path d="M0 7.500h8" stroke="#a8a8a8" /></Svg>
              <Svg w={8} h={8} vb="0 0 8 8"><path d="M.5 2.500h5v5h-5zM2.500 .5h5v5" fill="none" stroke="#a8a8a8" /></Svg>
              <Svg w={8} h={8} vb="0 0 8 8"><path d="M0 0l8 8M8 0L0 8" stroke="#a8a8a8" /></Svg>
            </WindowControls>
          </TitleBar>
          <MenuBar>
            <MenuItem><u>F</u>ile</MenuItem>
            <MenuItem><u>P</u>anels</MenuItem>
            <MenuItem><u>H</u>elp</MenuItem>
          </MenuBar>
          <ToolBar>
            <Grip />
            {tools.map((t) => (
              <Tool key={t.text} $w={t.w} $on={t.on}>
                {t.icon}
                <span>{t.text}</span>
              </Tool>
            ))}
            <ToolSlim $w={58}><PlusTool /></ToolSlim>
            <ToolSlim $w={40}><MinusTool /><DropMark /></ToolSlim>
          </ToolBar>
          <Main>
            <LeftPanel>
              <DockHeader $h={23}>
                <Monitor />
                <HeaderTitle>Displays</HeaderTitle>
                <CloseChip><CloseBadge /></CloseChip>
              </DockHeader>
              <TreeArea>
                <TreeList>
                  {rows.map((r, i) => <TreeRow key={i} r={r} />)}
                </TreeList>
                <ScrollBar>
                  <ScrollBtn><ScrollMark $up /></ScrollBtn>
                  <ScrollThumb $h={400} />
                  <ScrollBtn $end><ScrollMark /></ScrollBtn>
                </ScrollBar>
              </TreeArea>
              <HelpBox>
                <HelpText>
                  <b>TF</b>
                  Displays the TF transform hierarchy.
                  <br />
                  <a>More Information</a>.
                </HelpText>
                <ScrollBar>
                  <ScrollBtn><ScrollMark $up /></ScrollBtn>
                  <ScrollThumb $h={40} />
                  <ScrollBtn $end><ScrollMark /></ScrollBtn>
                </ScrollBar>
              </HelpBox>
              <ButtonRow>
                <Button>Add</Button>
                <Button>Duplicate</Button>
                <Button>Remove</Button>
                <Button>Rename</Button>
              </ButtonRow>
            </LeftPanel>
            <CenterSplit><GripDots /><SideArrow /></CenterSplit>
            <CanvasColumn><MapView /></CanvasColumn>
            <RightSplit><SideArrow $right /></RightSplit>
          </Main>
          <DockHeader $h={22}>
            <Clock />
            <HeaderTitle>Time</HeaderTitle>
            <CloseChip><CloseBadge /></CloseChip>
          </DockHeader>
          <TimeRow>
            <TimeLabel>ROS Time:</TimeLabel>
            <TimeField>1746108719.03</TimeField>
            <TimeLabel>ROS Elapsed:</TimeLabel>
            <TimeField>301.73</TimeField>
            <TimeLabel>Wall Time:</TimeLabel>
            <TimeField>1746108719.07</TimeField>
            <TimeLabel>Wall Elapsed:</TimeLabel>
            <TimeField>301.73</TimeField>
            <Experimental><CheckBox />Experimental</Experimental>
          </TimeRow>
          <StatusRow>
            <Button $w={67}>Reset</Button>
            <StatusText>
              <b>Left-Click:</b> Rotate. <b>Middle-Click:</b> Move X/Y. <b>Right-Click:</b> Zoom. <b>Shift:</b> More options.
            </StatusText>
            <Fps>31 fps</Fps>
          </StatusRow>
        </Window>
      </Body>
    </Page>
  );
}
